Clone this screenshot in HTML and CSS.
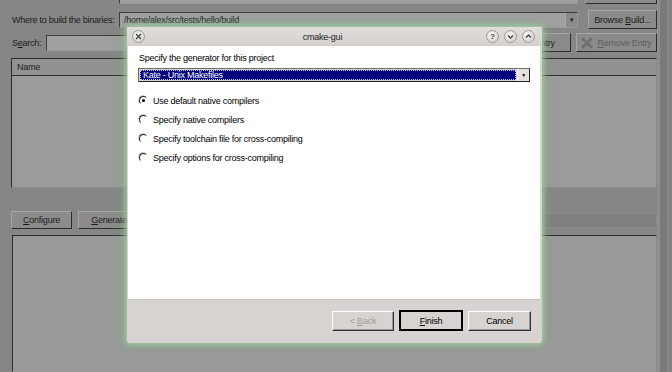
FILE: index.html
```html
<!DOCTYPE html>
<html lang="en">

<head>
    <meta charset="UTF-8">
    <title>cmake-gui</title>
    <link rel="stylesheet" href="styles.css">
</head>

<body>
    <div class="main">
        <div class="row row-source">
            <div></div>
            <div class="field"></div>
            <div class="btn"></div>
        </div>
        <div class="row row-build">
            <span class="label">Where to build the binaries:</span>
            <div class="field combo">
                <span>/home/alex/src/tests/hello/build</span>
                <span class="drop">&#9660;</span>
            </div>
            <div class="btn"><span>Browse <u>B</u>uild...</span></div>
        </div>
        <div class="row row-search">
            <span class="label">S<u>e</u>arch:</span>
            <div class="field"></div>
            <div class="btn"><span>Add Entry</span></div>
            <div class="btn off">
                <svg width="12" height="12" viewBox="0 0 12 12">
                    <path d="M2 2 L10 10 M10 2 L2 10" stroke="#6e6e6e" stroke-width="3" stroke-linecap="round" />
                </svg>
                <span><u>R</u>emove Entry</span>
            </div>
        </div>
        <div class="table">
            <div class="thead">Name</div>
        </div>
        <div class="row row-config">
            <div class="btn"><span><u>C</u>onfigure</span></div>
            <div class="btn"><span><u>G</u>enerate</span></div>
            <div></div>
            <div class="progress"></div>
        </div>
        <div class="output"></div>
    </div>
    <div class="side"></div>

    <div class="dialog">
        <div class="titlebar">
            <span class="tb-btn">
                <svg width="7" height="7" viewBox="0 0 7 7">
                    <path d="M1 1 L6 6 M6 1 L1 6" stroke="#444" stroke-width="1.4" />
                </svg>
            </span>
            <span class="title">cmake-gui</span>
            <div class="tb-right">
                <span class="tb-btn"><span class="q">?</span></span>
                <span class="tb-btn">
                    <svg width="7" height="7" viewBox="0 0 7 7">
                        <path d="M1 2.5 L3.5 5 L6 2.5" fill="none" stroke="#444" stroke-width="1.4" />
                    </svg>
                </span>
                <span class="tb-btn">
                    <svg width="7" height="7" viewBox="0 0 7 7">
                        <path d="M1 4.5 L3.5 2 L6 4.5" fill="none" stroke="#444" stroke-width="1.4" />
                    </svg>
                </span>
            </div>
        </div>
        <div class="dlg-body">
            <p class="prompt">Specify the generator for this project</p>
            <div class="gen-combo">
                <span class="gen-value">Kate - Unix Makefiles</span>
                <span class="gen-drop">&#9660;</span>
            </div>
            <ul class="radios">
                <li><span class="radio checked"></span>Use default native compilers</li>
                <li><span class="radio"></span>Specify native compilers</li>
                <li><span class="radio"></span>Specify toolchain file for cross-compiling</li>
                <li><span class="radio"></span>Specify options for cross-compiling</li>
            </ul>
        </div>
        <div class="dlg-foot">
            <div class="dbtn disabled"><span>&lt; <u>B</u>ack</span></div>
            <div class="dbtn default"><span><u>F</u>inish</span></div>
            <div class="dbtn"><span>Cancel</span></div>
        </div>
    </div>
</body>

</html>
```

FILE: styles.css
```css
* {
    padding: 0;
    margin: 0;
    box-sizing: border-box;
}

body {
    display: flex;
    width: 672px;
    height: 372px;
    overflow: hidden;
    background: #868686;
    font-family: 'Liberation Sans', Arial, sans-serif;
    font-size: 9px;
    letter-spacing: -0.25px;
    color: #1c1c1c;
}

.main {
    width: 657px;
    height: 372px;
    padding-left: 11px;
    display: flex;
    flex-direction: column;
}

.row {
    display: grid;
    align-items: center;
}

.row-source {
    grid-template-columns: 101px 459px 72px;
    column-gap: 7px;
    height: 20px;
    margin-top: -16px;
}

.row-source .field {
    height: 19px;
}

.row-build {
    grid-template-columns: 98px 459px 69px;
    column-gap: 10px;
    height: 19px;
    margin-top: 6px;
}

.row-search {
    grid-template-columns: 30px 1fr 70px 81px;
    column-gap: 5px;
    height: 19px;
    margin-top: 4px;
}

.label {
    padding-left: 1px;
    white-space: nowrap;
}

.field {
    height: 16px;
    background: #a0a0a0;
    border: 1px solid;
    border-color: #3c3c3c #9a9a9a #9a9a9a #3c3c3c;
}

.combo {
    display: flex;
    align-items: center;
    justify-content: space-between;
    padding-left: 4px;
}

.drop {
    width: 12px;
    height: 14px;
    display: grid;
    place-items: center;
    font-size: 6px;
    background: #8a8a8a;
    border-left: 1px solid #a8a8a8;
}

.btn {
    height: 19px;
    display: flex;
    align-items: center;
    justify-content: center;
    gap: 4px;
    background: #8c8b8a;
    border: 1px solid;
    border-color: #a6a6a6 #2c2c2c #2c2c2c #a6a6a6;
    white-space: nowrap;
}

.btn.off {
    color: #5e5e5e;
}

.table {
    height: 130px;
    margin-top: 6px;
    background: #9b9b9b;
    border: 1px solid;
    border-color: #2c2c2c #8a8a8a #8a8a8a #2c2c2c;
}

.thead {
    height: 17px;
    padding-left: 5px;
    line-height: 16px;
    background: #929292;
    border-bottom: 1px solid #2e2e2e;
}

.row-config {
    grid-template-columns: 61px 62px 1fr 1fr;
    column-gap: 6px;
    height: 18px;
    margin-top: 23px;
}

.row-config .btn {
    height: 18px;
}

.progress {
    height: 15px;
    background: #7f7f7f;
    border: 1px solid #8c8c8c;
}

.output {
    flex: 1;
    margin-top: 6px;
    margin-left: 1px;
    background: #9a9a9a;
    border: 1px solid;
    border-color: #2c2c2c #8a8a8a transparent #2c2c2c;
}

.side {
    width: 15px;
    height: 372px;
    background: linear-gradient(to right, #8e8e8e 0 3px, #7a7a7a 3px 10px, #8a8a8a 10px 11px, #838383 11px);
}

/* dialog over the dimmed window */
.dialog {
    position: absolute;
    left: 127px;
    top: 27px;
    width: 415px;
    height: 316px;
    display: flex;
    flex-direction: column;
    background: #d7d3d0;
    border-radius: 3px;
    box-shadow: 0 0 5px 2px rgba(160, 215, 160, 0.8), 0 0 14px 4px rgba(120, 170, 120, 0.35);
    color: #000;
}

.titlebar {
    height: 19px;
    display: flex;
    align-items: center;
    padding: 0 7px 0 5px;
    background: linear-gradient(#e0dddb, #d4d0cd);
}

.title {
    flex: 1;
    text-align: center;
    color: #222;
    padding-left: 14px;
}

.tb-right {
    display: flex;
    gap: 5px;
}

.tb-btn {
    width: 13px;
    height: 13px;
    border-radius: 50%;
    display: grid;
    place-items: center;
    background: radial-gradient(circle at 40% 35%, #fbfbfb, #c8c6c4);
    border: 1px solid #a09c99;
}

.q {
    font-size: 8px;
    line-height: 8px;
    font-weight: bold;
    color: #444;
    letter-spacing: 0;
}

.dlg-body {
    height: 254px;
    margin: 0 2px 0 1px;
    padding: 7px 10px 0 10px;
    background: #fff;
    border-bottom: 1px solid #c6c3c0;
}

.prompt {
    padding-left: 1px;
    line-height: 10px;
}

.gen-combo {
    display: flex;
    height: 14px;
    margin-top: 5px;
    border: 1px solid;
    border-color: #6e6e6e #202020 #202020 #6e6e6e;
    background: #d7d3d0;
}

.gen-value {
    flex: 1;
    margin: 1px;
    padding-left: 3px;
    line-height: 10px;
    color: #fff;
    background: #000080;
    outline: 1px dotted #c8c8c8;
    outline-offset: -1px;
}

.gen-drop {
    width: 12px;
    display: grid;
    place-items: center;
    font-size: 5px;
    background: #e4e1de;
    border-left: 1px solid #fff;
}

.radios {
    list-style: none;
    margin-top: 9px;
    padding-left: 1px;
}

.radios li {
    height: 19px;
    display: flex;
    align-items: center;
    gap: 5px;
}

.radio {
    width: 9px;
    height: 9px;
    border-radius: 50%;
    display: grid;
    place-items: center;
    border: 1px solid;
    border-color: #222 #fff #fff #222;
    box-shadow: -0.5px -0.5px 0 #8a8a8a;
}

.radio.checked::after {
    content: '';
    width: 3px;
    height: 3px;
    border-radius: 50%;
    background: #000;
}

.dlg-foot {
    flex: 1;
    display: flex;
    justify-content: flex-end;
    align-items: flex-start;
    gap: 5px;
    padding: 11px 11px 0 0;
}

.dbtn {
    width: 63px;
    height: 20px;
    display: flex;
    align-items: center;
    justify-content: center;
    background: #d7d3d0;
    border: 1px solid;
    border-color: #fff #303030 #303030 #fff;
    box-shadow: inset -1px -1px #9a9794;
}

.dbtn.disabled {
    width: 62px;
    color: #a19e9b;
}

.dbtn.default {
    width: 64px;
    height: 21px;
    margin-top: -1px;
    outline: 1px solid #000;
    outline-offset: -2px;
    border-color: #000;
}
```
